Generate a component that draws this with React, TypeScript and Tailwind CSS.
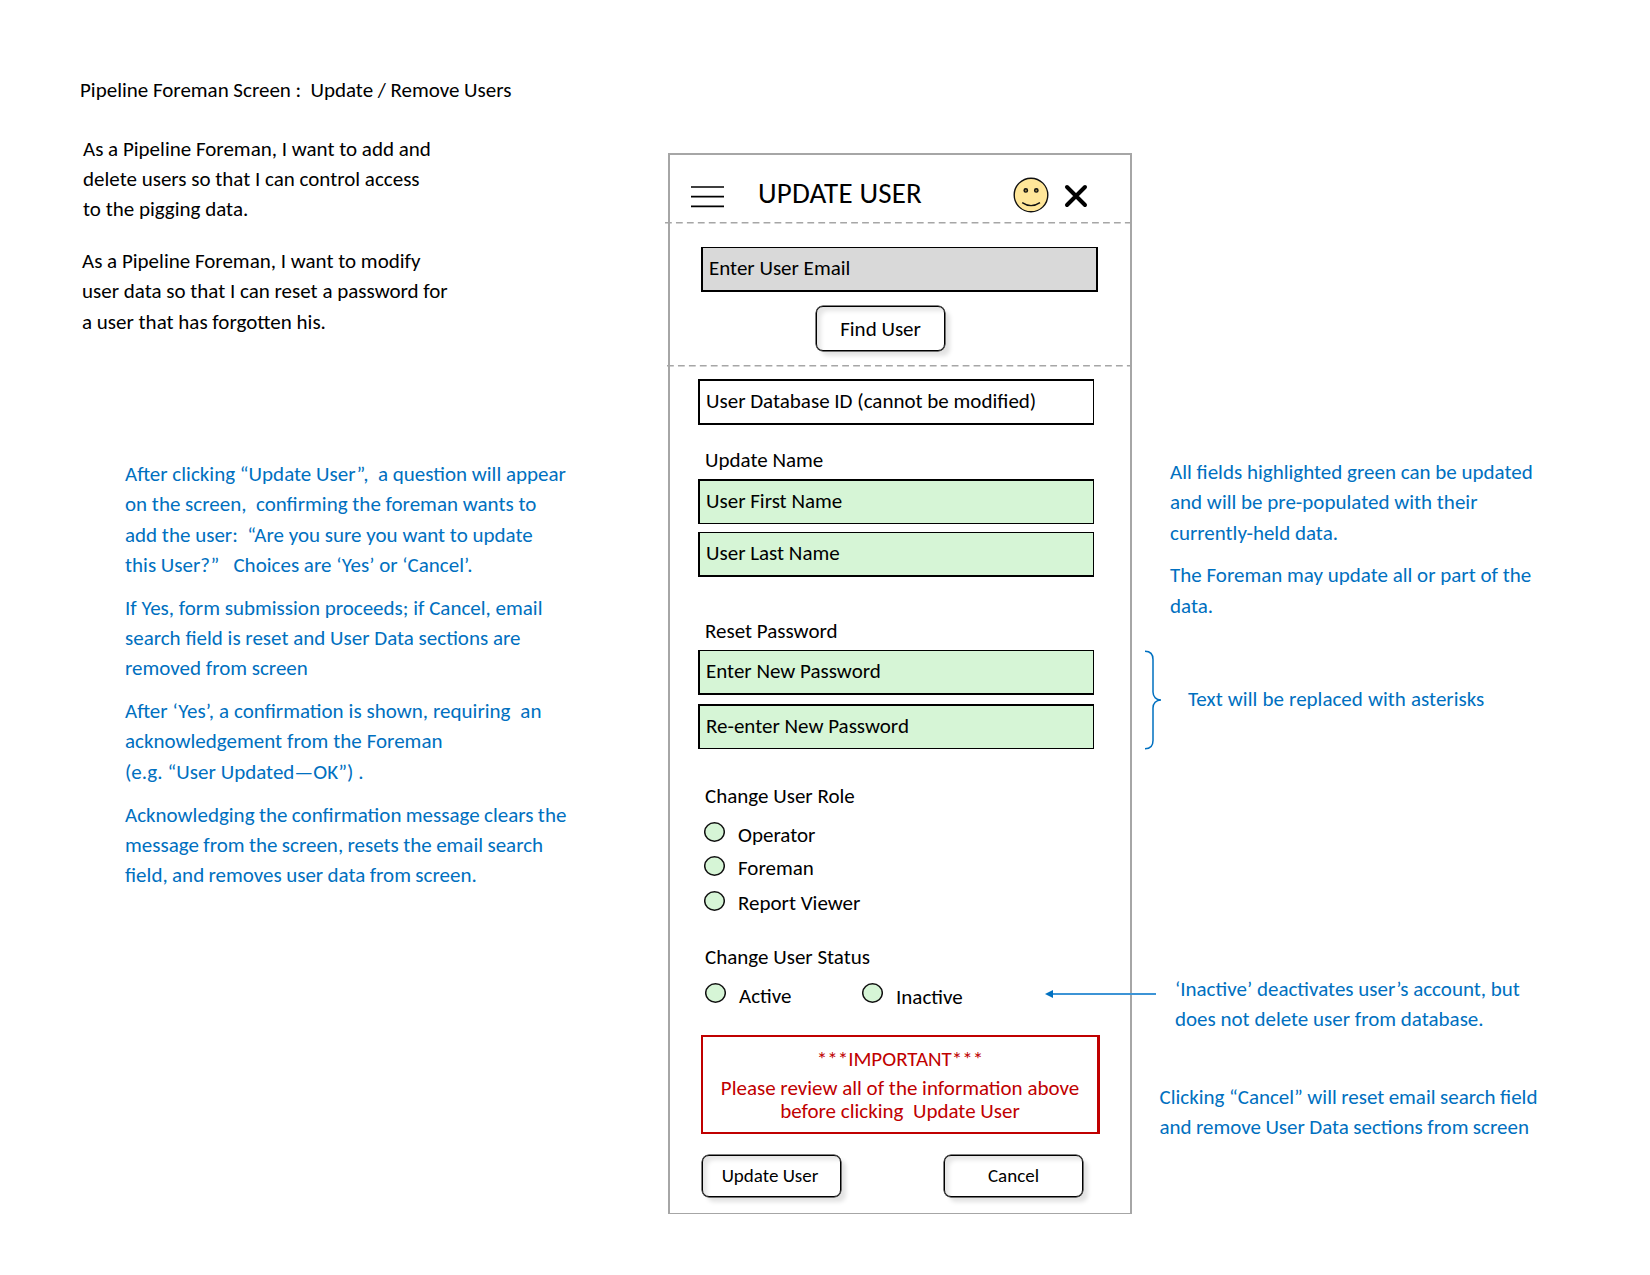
import type { ReactNode } from "react";

function Lines({ lines, className = "" }: { lines: string[]; className?: string }) {
  return (
    <p className={`leading-[30.3px] ${className}`}>
      {lines.map((line) => (
        <span key={line} className="block">{line}</span>
      ))}
    </p>
  );
}

function Field({ text, className }: { text: string; className: string }) {
  return <div className={`border-black pl-[6px] ${className}`}>{text}</div>;
}

function Label({ children, className }: { children: ReactNode; className: string }) {
  return <div className={`ml-[35px] h-[26px] ${className}`}>{children}</div>;
}

function Button({ text, className }: { text: string; className: string }) {
  return (
    <button
      className={`block rounded-[7px] border border-black shadow-[0_0_0_0.5px_#000,5px_5px_4px_#e3e3e3,inset_5px_5px_4px_-1px_#e6e6e6] ${className}`}
    >
      {text}
    </button>
  );
}

function Radio({ className = "" }: { className?: string }) {
  return (
    <svg className={`shrink-0 ${className}`} width="21" height="20" viewBox="0 0 21 20">
      <ellipse cx="10.5" cy="10" rx="9.8" ry="9.2" fill="#d6f5d6" stroke="#111" strokeWidth="1.5" />
    </svg>
  );
}

function Dashes({ className, width }: { className: string; width: number }) {
  return (
    <svg className={`block shrink-0 overflow-visible ${className}`} width={width} height="2" viewBox={`0 0 ${width} 2`}>
      <line x1="0" y1="0.7" x2={width} y2="0.7" stroke="#a6a6a6" strokeWidth="1.4" strokeDasharray="6.8 4.15" />
    </svg>
  );
}

function Phone() {
  return (
    <section className="relative flex h-[1061px] w-[464px] shrink-0 flex-col border-2 border-b border-[#a6a6a6]">
      <header className="flex h-[67px] shrink-0 items-start pl-[21px]">
        <svg className="mt-[31px]" width="33" height="22" viewBox="0 0 33 22">
          <path d="M0 1h33M0 10.7h33M0 20.3h33" stroke="#000" strokeWidth="1.7" />
        </svg>
        <h1 className="ml-[34px] mt-[21px] w-[255px] text-[29px] leading-[34px] tracking-[0.15px]">UPDATE USER</h1>
        <svg className="mt-[22px]" width="36" height="36" viewBox="0 0 36 36" fill="none" stroke="#111" strokeWidth="1.4">
          <circle cx="18" cy="18" r="16.8" fill="#ffe699" />
          <circle cx="12.8" cy="13.4" r="1.7" fill="#a08a45" />
          <circle cx="23.3" cy="13.4" r="1.7" fill="#a08a45" />
          <path d="M9.2 25.6Q18 31.6 27 25.6" />
        </svg>
        <svg className="ml-[15px] mt-[29px]" width="24" height="24" viewBox="0 0 24 24">
          <path d="M3 3 21 21M21 3 3 21" stroke="#000" strokeWidth="4" strokeLinecap="round" />
        </svg>
      </header>
      <Dashes className="-ml-[5px]" width={465} />

      <Field text="Enter User Email" className="ml-[31px] mt-[23px] h-[45px] w-[397px] shrink-0 border-2 border-t bg-[#d9d9d9] pt-[7px]" />
      <Button text="Find User" className="ml-[146px] mt-[14px] h-[45px] w-[129px] shrink-0 pt-px" />
      <Dashes className="-ml-[3px] mt-[14px]" width={465} />

      <Field text="User Database ID (cannot be modified)" className="ml-[28px] mt-[12px] h-[46px] w-[396px] shrink-0 border-2 border-r pt-[7px]" />
      <Label className="mt-[22px]">Update Name</Label>
      <Field text="User First Name" className="ml-[28px] mt-[6px] h-[45px] w-[396px] shrink-0 border border-l-2 border-t-2 bg-[#d6f5d6] pt-[7px]" />
      <Field text="User Last Name" className="ml-[28px] mt-[8px] h-[45px] w-[396px] shrink-0 border border-b-2 border-l-2 bg-[#d6f5d6] pt-[7px]" />

      <Label className="mt-[41px]">Reset Password</Label>
      <Field text="Enter New Password" className="ml-[28px] mt-[6px] h-[45px] w-[396px] shrink-0 border border-b-2 border-l-2 bg-[#d6f5d6] pt-[7px]" />
      <Field text="Re-enter New Password" className="ml-[28px] mt-[9px] h-[45px] w-[396px] shrink-0 border border-l-2 border-t-2 bg-[#d6f5d6] pt-[7px]" />

      <Label className="mt-[34px]">Change User Role</Label>
      <div className="ml-[34px] mt-[13px] flex h-[33px] items-start"><Radio /><span className="ml-[13px]">Operator</span></div>
      <div className="ml-[34px] flex h-[35px] items-start"><Radio className="mt-px" /><span className="ml-[13px]">Foreman</span></div>
      <div className="ml-[34px] flex h-[33px] items-start"><Radio className="mt-px" /><span className="ml-[13px]">Report Viewer</span></div>

      <Label className="mt-[21px]">Change User Status</Label>
      <div className="ml-[35px] mt-[13px] flex h-[27px] items-start">
        <Radio />
        <span className="ml-[13px] w-[123px]">Active</span>
        <Radio />
        <span className="ml-[13px] mt-px">Inactive</span>
      </div>

      <div className="ml-[31px] mt-[25px] h-[99px] w-[399px] shrink-0 border-2 border-r-[3px] border-[#c00000] pt-[9px] text-center leading-[23px] text-[#c00000]">
        <p className="leading-[26px]">***IMPORTANT***</p>
        <p className="mt-[5px] whitespace-pre">Please review all of the information above</p>
        <p className="whitespace-pre">before clicking  Update User</p>
      </div>

      <div className="ml-[32px] mt-[21px] flex gap-[103px] text-[19px]">
        <Button text="Update User" className="h-[42px] w-[139px] pr-[3px]" />
        <Button text="Cancel" className="h-[42px] w-[139px]" />
      </div>

      <svg className="absolute left-[375px] top-[834px]" width="111" height="10" viewBox="0 0 111 10">
        <path d="M7 5h104" stroke="#3c94d6" strokeWidth="2" />
        <path d="M0 5 8 1v8z" fill="#0070c0" />
      </svg>
    </section>
  );
}

export default function App() {
  return (
    <main className="flex h-[1275px] w-[1650px] items-start overflow-hidden bg-white font-['Carlito','Calibri','Lato',sans-serif] text-[21px] leading-[26px] text-black">
      <div className="w-[668px] shrink-0 whitespace-pre pl-[80px] pt-[74.5px]">
        <h2 className="leading-[30.3px] [word-spacing:-0.1px]">Pipeline Foreman Screen :  Update / Remove Users</h2>
        <Lines className="ml-[3px] mt-[29px]" lines={["As a Pipeline Foreman, I want to add and", "delete users so that I can control access", "to the pigging data."]} />
        <Lines className="ml-[2px] mt-[21.5px]" lines={["As a Pipeline Foreman, I want to modify", "user data so that I can reset a password for", "a user that has forgotten his."]} />
        <div className="ml-[45px] mt-[122px] flex flex-col gap-[12.5px] text-[#0070c0]">
          <Lines lines={["After clicking “Update User”,  a question will appear", "on the screen,  confirming the foreman wants to", "add the user:  “Are you sure you want to update", "this User?”   Choices are ‘Yes’ or ‘Cancel’."]} />
          <Lines lines={["If Yes, form submission proceeds; if Cancel, email", "search field is reset and User Data sections are", "removed from screen"]} />
          <Lines className="[word-spacing:0.2px]" lines={["After ‘Yes’, a confirmation is shown, requiring  an", "acknowledgement from the Foreman", "(e.g. “User Updated—OK”) ."]} />
          <Lines className="[word-spacing:-0.35px]" lines={["Acknowledging the confirmation message clears the", "message from the screen, resets the email search", "field, and removes user data from screen."]} />
        </div>
      </div>

      <div className="pt-[153px]"><Phone /></div>

      <aside className="whitespace-pre pl-[13px] pt-[457px] text-[#0070c0]">
        <Lines className="ml-[25px]" lines={["All fields highlighted green can be updated", "and will be pre-populated with their", "currently-held data."]} />
        <Lines className="ml-[25px] mt-[12.5px]" lines={["The Foreman may update all or part of the", "data."]} />
        <div className="mt-[29px] flex h-[100px] items-start">
          <svg className="shrink-0" width="17" height="100" viewBox="0 0 17 100" fill="none" stroke="#0070c0" strokeWidth="1.5">
            <path d="M0 1.2C5 1.2 8 4 8 9.5V42C8 46.5 11 50 16 50C11 50 8 53.5 8 58V90.5C8 96 5 98.800 0 98.800" />
          </svg>
          <span className="ml-[26px] mt-[36px] [word-spacing:0.4px]">Text will be replaced with asterisks</span>
        </div>
        <Lines className="ml-[30px] mt-[224px]" lines={["‘Inactive’ deactivates user’s account, but", "does not delete user from database."]} />
        <Lines className="ml-[14.5px] mt-[47.5px] [word-spacing:-0.35px]" lines={["Clicking “Cancel” will reset email search field", "and remove User Data sections from screen"]} />
      </aside>
    </main>
  );
}
